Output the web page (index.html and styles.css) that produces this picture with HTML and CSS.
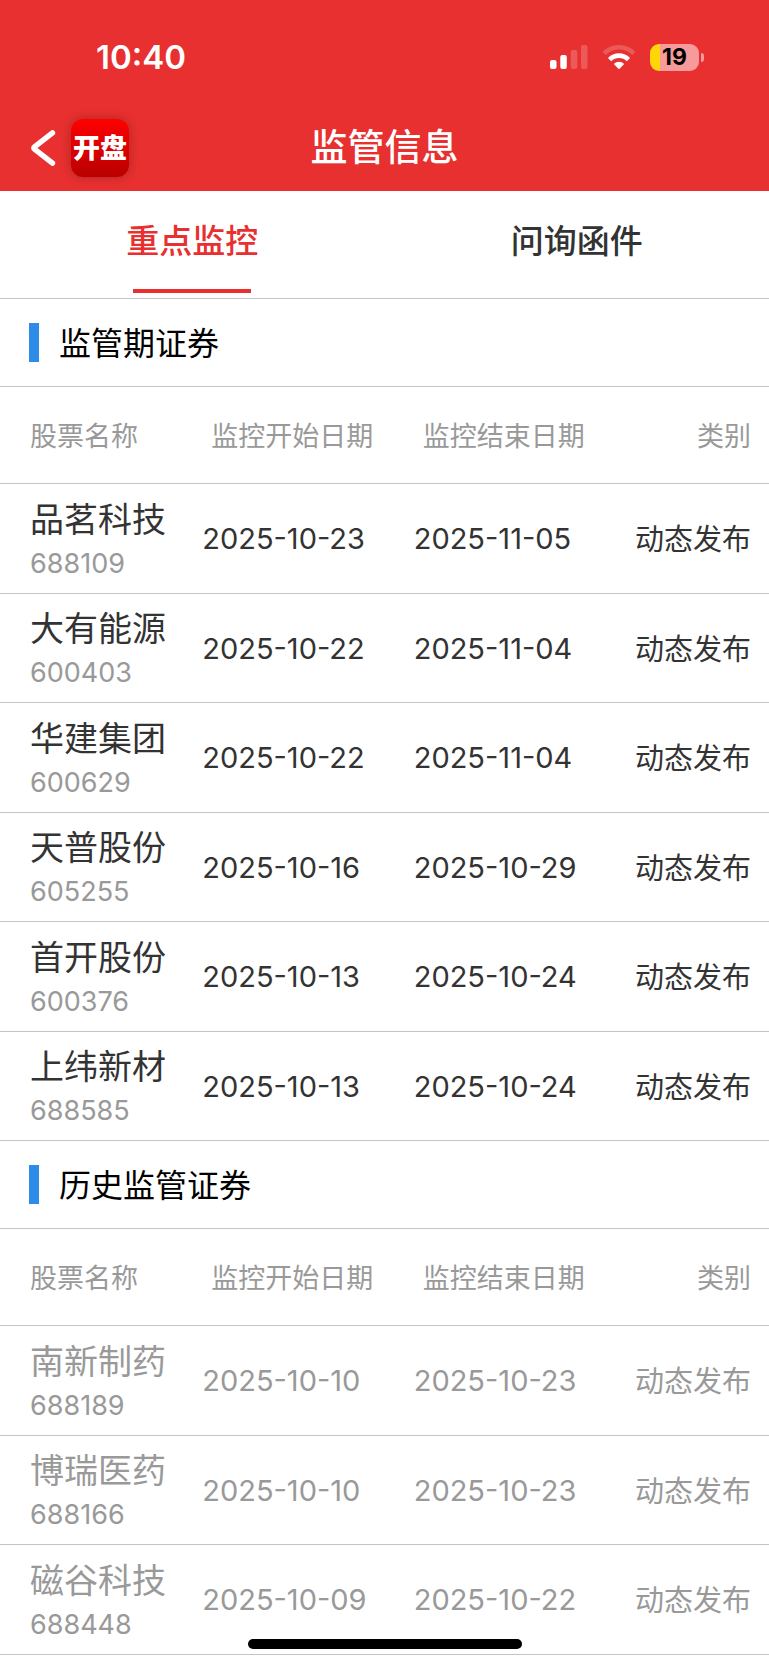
FILE: index.html
```html
<!DOCTYPE html>
<html lang="zh-CN">
<head>
<meta charset="utf-8">
<meta name="viewport" content="width=device-width, initial-scale=1">
<title>监管信息</title>
<link rel="stylesheet" href="styles.css">
</head>
<body>
<div class="screen">
  <header class="header">
    <div class="status">
      <time class="clock">10:40</time>
      <div class="indicators">
        <svg class="signal" width="38" height="24" viewBox="0 0 38 24" fill="#fff" aria-hidden="true">
          <rect x="0" y="15" width="6.5" height="9" rx="2"/>
          <rect x="10.3" y="10" width="6.5" height="14" rx="2"/>
          <rect x="20.8" y="5" width="6.5" height="19" rx="2" opacity=".2"/>
          <rect x="31" y="0" width="6.5" height="24" rx="2" opacity=".2"/>
        </svg>
        <svg class="wifi" width="34" height="24" viewBox="0 0 34 24" fill="none" stroke="#fff" aria-hidden="true">
          <path d="M2.2 8.4a21 21 0 0 1 29.6 0" stroke-width="4.6" opacity=".2"/>
          <path d="M7.6 14.6a13.2 13.2 0 0 1 18.8 0" stroke-width="4.6"/>
          <path d="M17 24.4l-5.2-5.4a7.4 7.4 0 0 1 10.4 0z" fill="#fff" stroke="none"/>
        </svg>
        <div class="battery"><span class="battery-level">19</span><i class="battery-cap"></i></div>
      </div>
    </div>
    <nav class="nav">
      <div class="nav-start">
        <button class="back" type="button" aria-label="返回">
          <svg width="26" height="36" viewBox="0 0 26 36" fill="none" stroke="#fff" stroke-width="5.4" stroke-linecap="round" stroke-linejoin="round"><path d="M22.5 2.8 4.2 17.2a1 1 0 0 0 0 1.6L22.5 33.2"/></svg>
        </button>
        <span class="app-icon">开盘</span>
      </div>
      <h1 class="title">监管信息</h1>
    </nav>
  </header>

  <div class="tabs" role="tablist">
    <button class="tab tab-active" type="button" role="tab" aria-selected="true">重点监控</button>
    <button class="tab" type="button" role="tab" aria-selected="false">问询函件</button>
  </div>

  <main>
    <section>
      <h2 class="section-title"><span class="section-label">监管期证券</span></h2>
      <table class="stocks">
        <thead><tr><th class="col-name">股票名称</th><th class="col-date">监控开始日期</th><th class="col-date">监控结束日期</th><th class="col-type">类别</th></tr></thead>
        <tbody>
          <tr><td><span class="name">品茗科技</span><span class="code">688109</span></td><td>2025-10-23</td><td>2025-11-05</td><td>动态发布</td></tr>
          <tr><td><span class="name">大有能源</span><span class="code">600403</span></td><td>2025-10-22</td><td>2025-11-04</td><td>动态发布</td></tr>
          <tr><td><span class="name">华建集团</span><span class="code">600629</span></td><td>2025-10-22</td><td>2025-11-04</td><td>动态发布</td></tr>
          <tr><td><span class="name">天普股份</span><span class="code">605255</span></td><td>2025-10-16</td><td>2025-10-29</td><td>动态发布</td></tr>
          <tr><td><span class="name">首开股份</span><span class="code">600376</span></td><td>2025-10-13</td><td>2025-10-24</td><td>动态发布</td></tr>
          <tr><td><span class="name">上纬新材</span><span class="code">688585</span></td><td>2025-10-13</td><td>2025-10-24</td><td>动态发布</td></tr>
        </tbody>
      </table>
    </section>
    <section>
      <h2 class="section-title"><span class="section-label">历史监管证券</span></h2>
      <table class="stocks stocks-past">
        <thead><tr><th class="col-name">股票名称</th><th class="col-date">监控开始日期</th><th class="col-date">监控结束日期</th><th class="col-type">类别</th></tr></thead>
        <tbody>
          <tr><td><span class="name">南新制药</span><span class="code">688189</span></td><td>2025-10-10</td><td>2025-10-23</td><td>动态发布</td></tr>
          <tr><td><span class="name">博瑞医药</span><span class="code">688166</span></td><td>2025-10-10</td><td>2025-10-23</td><td>动态发布</td></tr>
          <tr><td><span class="name">磁谷科技</span><span class="code">688448</span></td><td>2025-10-09</td><td>2025-10-22</td><td>动态发布</td></tr>
        </tbody>
      </table>
    </section>
  </main>
  <div class="home-indicator"></div>
</div>
</body>
</html>
```
FILE: styles.css
```css
* { box-sizing: border-box; }

body {
  margin: 0;
  background: #fff;
  color: #333;
  font-family: Inter, "Noto Sans CJK SC", sans-serif;
}

button {
  margin: 0;
  padding: 0;
  border: 0;
  background: none;
  font-family: inherit;
  color: inherit;
}

.screen { min-height: 100vh; }

.header {
  background: #e83030;
  color: #fff;
}

/* Status bar */
.status {
  display: flex;
  align-items: center;
  justify-content: space-between;
  height: 104px;
  padding: 10px 65px 0 96px;
}

.clock {
  font-size: 33px;
  font-weight: 600;
  line-height: 40px;
}

.indicators {
  display: flex;
  align-items: center;
  gap: 14px;
}

.battery {
  display: flex;
  align-items: center;
  gap: 2px;
}

.battery-level {
  width: 49px;
  height: 27px;
  border-radius: 9px;
  background: linear-gradient(90deg, #ffd60a 10px, #f69a9a 10px);
  color: #000;
  font-size: 23px;
  font-weight: 700;
  line-height: 27px;
  text-align: center;
}

.battery-cap {
  width: 3px;
  height: 9px;
  border-radius: 0 4px 4px 0;
  background: #f69a9a;
}

/* Navigation bar */
.nav {
  display: grid;
  grid-template-columns: 1fr auto 1fr;
  align-items: center;
  height: 87px;
  padding: 0 30px;
}

.nav-start {
  display: flex;
  align-items: center;
  gap: 15px;
}

.back { display: flex; }

.app-icon {
  width: 58px;
  height: 58px;
  border-radius: 12px;
  background: linear-gradient(#ff0000, #b80000);
  box-shadow: 0 0 10px rgba(90, 20, 20, 0.4);
  font-size: 27px;
  font-weight: 900;
  line-height: 60px;
  text-align: center;
}

.title {
  margin: 0;
  font-size: 37px;
  font-weight: 500;
  line-height: 48px;
}

/* Tabs */
.tabs {
  display: flex;
  border-bottom: 1px solid #c4c4c4;
}

.tab {
  display: flex;
  flex: 1;
  flex-direction: column;
  align-items: center;
  justify-content: space-between;
  height: 107px;
  padding: 26px 0 5px;
  font-size: 33px;
  font-weight: 500;
  line-height: 48px;
}

.tab-active { color: #e83030; }

.tab-active::after {
  content: "";
  width: 118px;
  height: 4px;
  background: #e83030;
}

/* Sections */
.section-title {
  display: flex;
  align-items: center;
  gap: 20px;
  height: 88px;
  margin: 0;
  padding-left: 29px;
  border-bottom: 1px solid #c4c4c4;
  color: #000;
  font-size: 32px;
  font-weight: 400;
}

.section-title::before {
  content: "";
  width: 10px;
  height: 39px;
  background: #2d8ce8;
}

.section-label { padding-bottom: 4px; }

.stocks {
  width: 100%;
  border-spacing: 0;
  table-layout: fixed;
  font-size: 29px;
}

.stocks th,
.stocks td {
  padding: 0;
  border-bottom: 1px solid #c4c4c4;
  text-align: left;
  white-space: nowrap;
}

.stocks th {
  height: 97px;
  padding-bottom: 2px;
  color: #999;
  font-size: 27px;
  font-weight: 400;
}

.stocks td { height: 109px; }

.stocks tr:nth-child(odd) td { height: 110px; }

.stocks .col-name { width: 26.3%; }

.stocks .col-date {
  width: 27.5%;
  padding-left: 9px;
}

.stocks th:first-child,
.stocks td:first-child { padding-left: 30px; }

.stocks td:first-child { padding-top: 6px; }

.stocks th:last-child,
.stocks td:last-child {
  padding-right: 18px;
  text-align: right;
}

.stocks td:last-child { padding-bottom: 3px; }

.name,
.code {
  display: block;
  line-height: 44px;
}

.name { font-size: 34px; }

.code {
  color: #999;
  font-size: 27px;
}

.stocks-past { color: #999; }

.home-indicator {
  position: fixed;
  bottom: 16px;
  left: 50%;
  width: 274px;
  height: 10px;
  margin-left: -137px;
  border-radius: 5px;
  background: #000;
}
```
